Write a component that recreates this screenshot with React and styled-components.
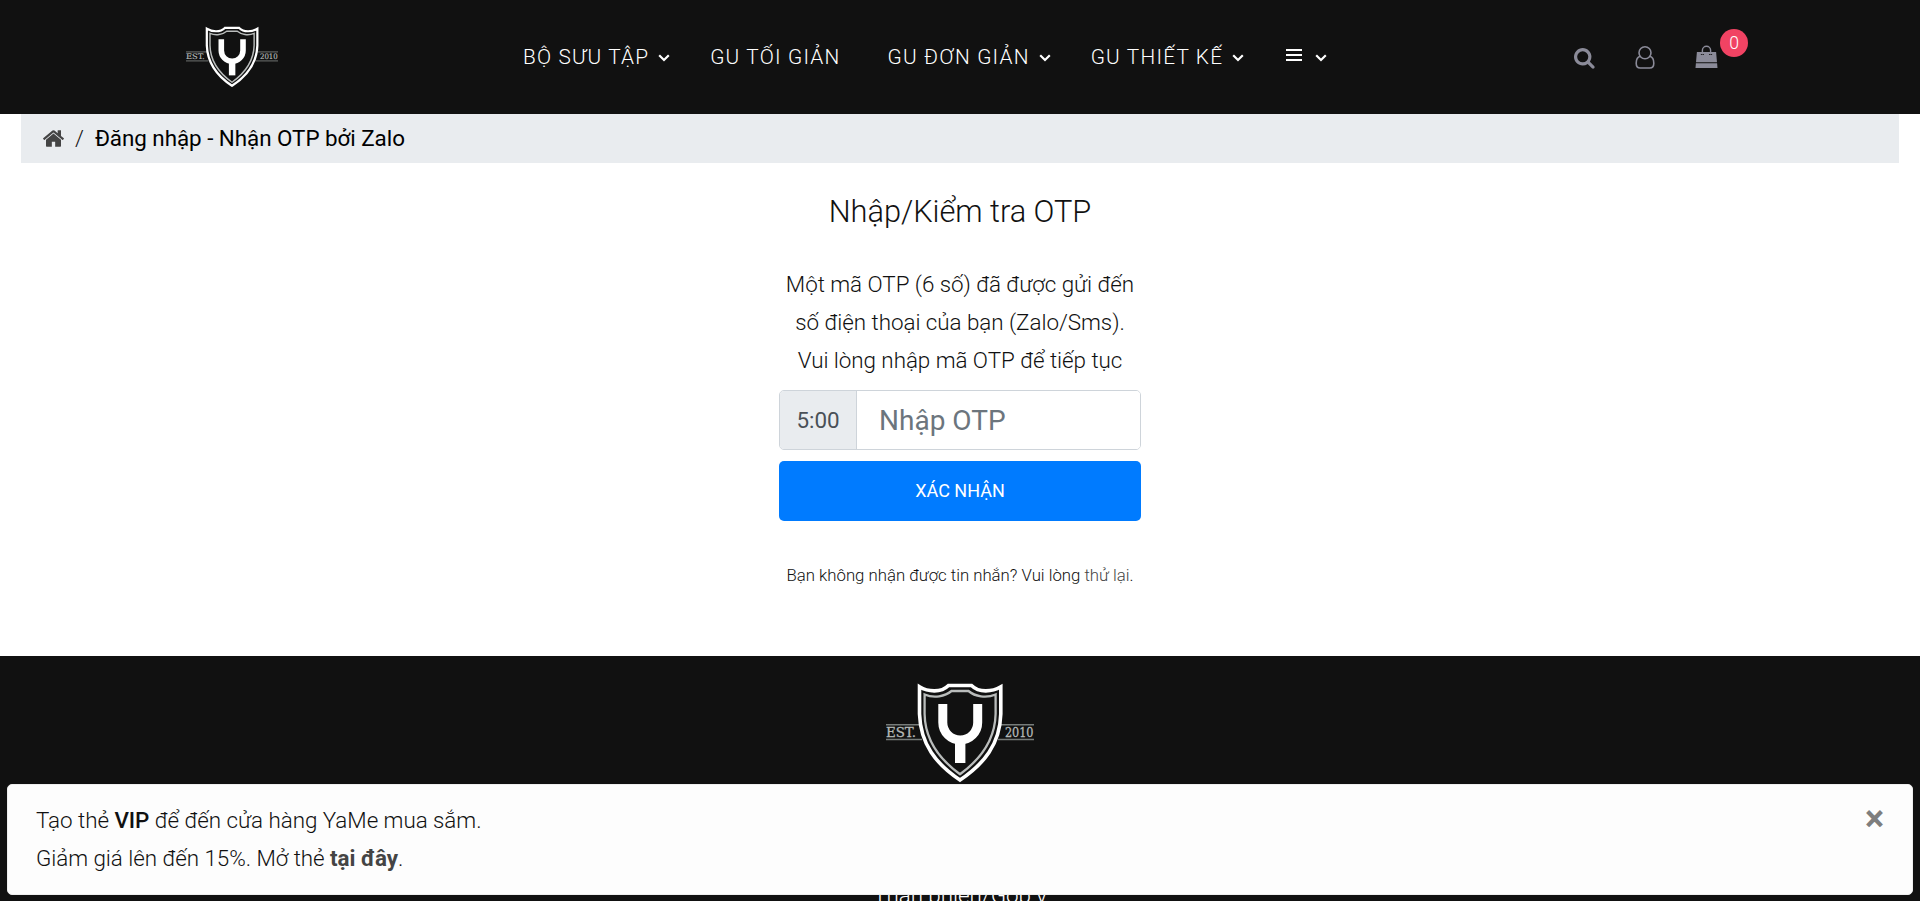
import React from 'react';
import styled, { createGlobalStyle } from 'styled-components';

const GlobalStyle = createGlobalStyle`
  *, *::before, *::after { box-sizing: border-box; }
  html, body { margin: 0; height: 100%; overflow: hidden; }
  body {
    background: #fff;
    color: #111;
    font-family: Roboto, "Liberation Sans", sans-serif;
    font-size: 22.4px;
    font-weight: 300;
    line-height: 1.7;
    letter-spacing: -0.04px;
  }
  a { color: inherit; text-decoration: none; }
`;

const Page = styled.div`
  height: 901px;
  overflow: hidden;
`;

const Header = styled.header`
  display: flex;
  align-items: flex-start;
  height: 114px;
  padding: 27px 171px 0 186px;
  background: #111;
`;

const Logo = styled.svg`
  display: block;
  flex-shrink: 0;
  overflow: visible;
  width: ${(p) => p.$width}px;
  height: ${(p) => p.$height}px;
`;

const Nav = styled.nav`
  display: flex;
  align-items: center;
  height: 62px;
  margin-left: 245px;
`;

const NavLink = styled.a`
  display: flex;
  align-items: center;
  margin-right: ${(p) => p.$after}px;
  color: #fff;
  font-size: 20.8px;
  letter-spacing: 1.2px;
  white-space: nowrap;
`;

const Chevron = styled.svg`
  width: 12px;
  height: 8px;
  margin: 0 0 1px ${(p) => p.$gap || 9}px;
`;

const MenuGlyph = styled.svg`
  width: 16px;
  height: 12px;
  margin-top: -6px;
`;

const Tools = styled.div`
  display: flex;
  margin: 18px 0 0 auto;
  gap: 40px;
  color: #8b8b99;
`;

const ToolIcon = styled.svg`
  display: block;
  width: ${(p) => p.$width}px;
  height: 24px;
`;

const Cart = styled.div`
  position: relative;
  width: 54px;
`;

const Badge = styled.span`
  position: absolute;
  top: -16px;
  left: 25px;
  width: 28px;
  height: 28px;
  border-radius: 50%;
  background: #f14363;
  color: #fff;
  font-size: 17.6px;
  font-weight: 350;
  line-height: 28px;
  text-align: center;
`;

const Breadcrumb = styled.div`
  display: flex;
  align-items: center;
  height: 49px;
  margin: 0 21px;
  padding: 0 22px 1px;
  background: #e9ecef;
`;

const HomeIcon = styled.svg`
  width: 21px;
  height: 17px;
`;

const Slash = styled.span`
  margin: 0 11px;
`;

const Current = styled.span`
  color: #000;
  font-weight: 400;
`;

const Main = styled.main`
  width: 362px;
  height: 493px;
  margin: 0 auto;
  padding-top: 26px;
  text-align: center;
`;

const Title = styled.h1`
  margin: 0 -20px 30px;
  font-size: 30.8px;
  font-weight: 300;
  line-height: 46px;
`;

const Message = styled.p`
  margin: 0 0 10.8px;
  white-space: nowrap;
`;

const InputGroup = styled.div`
  display: flex;
  height: 60px;
  border: 1px solid #ced4da;
  border-radius: 5px;
  overflow: hidden;
`;

const Timer = styled.span`
  display: flex;
  align-items: center;
  justify-content: center;
  width: 77px;
  border-right: 1px solid #ced4da;
  background: #e9ecef;
  color: #495057;
  font-weight: 400;
`;

const OtpInput = styled.input`
  flex: 1;
  min-width: 0;
  border: 0;
  padding: 0 22px;
  color: #495057;
  font: 400 28px Roboto, sans-serif;
  outline: none;
  &::placeholder { color: #6c757d; opacity: 1; }
`;

const Submit = styled.button`
  display: block;
  width: 100%;
  height: 60px;
  margin-top: 11px;
  padding: 0 0 1px;
  border: 0;
  border-radius: 5px;
  background: #007bff;
  color: #fff;
  font: 450 18px Roboto, sans-serif;
`;

const Retry = styled.p`
  margin: 40px 0 0;
  font-size: 16.8px;
  letter-spacing: -0.01px;
  white-space: nowrap;
  a { color: #444; }
`;

const Footer = styled.footer`
  display: flex;
  flex-direction: column;
  align-items: center;
  height: 245px;
  padding-top: 28px;
  background: #111;
  color: #fff;
`;

const FooterLink = styled.a`
  margin-top: 94px;
  font-size: 22.4px;
  white-space: nowrap;
`;

const Toast = styled.aside`
  position: fixed;
  left: 7px;
  right: 7px;
  bottom: 6px;
  display: flex;
  justify-content: space-between;
  height: 111px;
  padding: 16px 29px 16px 28px;
  border: 1px solid #eee;
  border-radius: 5px;
  background: #fdfdfd;
  p { margin: 0; }
  strong { font-weight: 500; }
  a { color: #444; font-weight: 700; }
`;

const Close = styled.button`
  width: 17px;
  height: 36px;
  padding: 0;
  border: 0;
  background: none;
  color: #7e7e7e;
  font: 700 36px/36px Roboto, sans-serif;
  display: flex;
  justify-content: center;
`;

function ShieldLogo({ width, height }) {
  const shield =
    'M33.5 2.8 C42 8 55 9 62.5 1.5 H85.5 C93 9 106 8 114.8 2.8 V30 C114 60 98 80 74 96 C50 80 34.5 60 33.5 30 Z';
  const inner =
    'M38.6 10.5 C48 14.5 59 12.5 65.5 7 H82.5 C89 12.5 100 14.5 109.6 10.5 V30 C109 56 95 75 74 90.2 C53 75 39 56 38.6 30 Z';
  return (
    <Logo $width={width} $height={height} viewBox="0 0 148 98" preserveAspectRatio="none" fill="none">
      <g stroke="#777c7a" strokeWidth="1.5">
        <path d="M0 40.7H34M0 55.4H36M114 40.7H148M112 55.4H148" />
      </g>
      <g fill="#b4b8b6" stroke="#b4b8b6" strokeWidth=".3" fontFamily="'DejaVu Serif', serif" fontSize="12.4">
        <text x="0" y="52.6" textLength="30" lengthAdjust="spacingAndGlyphs">EST.</text>
        <text x="119" y="52.6" textLength="28.5" lengthAdjust="spacingAndGlyphs">2010</text>
      </g>
      <path d={shield} fill="#111" stroke="#fff" strokeWidth="3.6" />
      <path d={inner} stroke="#b9bcbb" strokeWidth="2.3" />
      <path d="M56.8 20V38.5a17.4 17.4 0 0 0 34.9 0V20" stroke="#fff" strokeWidth="9" />
      <path d="M74.2 56V79" stroke="#fff" strokeWidth="10.4" />
    </Logo>
  );
}

function Down({ gap }) {
  return (
    <Chevron $gap={gap} viewBox="0 0 12 8" fill="none" stroke="#fff" strokeWidth="2.2">
      <path d="M1.2 1.3 6 6 10.8 1.3" />
    </Chevron>
  );
}

export default function App() {
  return (
    <Page>
      <GlobalStyle />
      <Header>
        <ShieldLogo width={92} height={60} />
        <Nav>
          <NavLink href="#" $after={40}>BỘ SƯU TẬP<Down /></NavLink>
          <NavLink href="#" $after={47}>GU TỐI GIẢN</NavLink>
          <NavLink href="#" $after={40}>GU ĐƠN GIẢN<Down /></NavLink>
          <NavLink href="#" $after={42}>GU THIẾT KẾ<Down /></NavLink>
          <NavLink href="#" $after={0}>
            <MenuGlyph viewBox="0 0 16 12" stroke="#fff" strokeWidth="2">
              <path d="M0 1H16M0 6H16M0 11H16" />
            </MenuGlyph>
            <Down gap={13} />
          </NavLink>
        </Nav>
        <Tools>
          <ToolIcon $width={21} viewBox="0 0 21 24">
            <path
              transform="translate(-.8 1.5) scale(.0124)"
              fill="currentColor"
              d="M1216 832q0-185-131.5-316.5t-316.5-131.5-316.5 131.5-131.5 316.5 131.5 316.5 316.5 131.5 316.5-131.5 131.5-316.5zm512 832q0 52-38 90t-90 38q-54 0-90-38l-343-342q-179 124-399 124-143 0-273.5-55.5t-225-150-150-225-55.5-273.5 55.5-273.5 150-225 225-150 273.5-55.5 273.5 55.5 225 150 150 225 55.5 273.5q0 220-124 399l343 343q37 37 37 90z"
            />
          </ToolIcon>
          <ToolIcon $width={20} viewBox="0 0 20 24" fill="none" stroke="currentColor" strokeWidth="1.6">
            <circle cx="10" cy="7.7" r="6" />
            <path d="M5.2 11.2C2.3 12 1.2 15 1.2 18.2c0 3 1.6 4.8 4 4.8h9.6c2.4 0 4-1.8 4-4.8 0-3.2-1.1-6.2-4-7" />
          </ToolIcon>
          <Cart>
            <ToolIcon $width={23} viewBox="0 0 23 24">
              <path fill="currentColor" d="M1.9 7H21.1L22 17.2H1ZM.9 18.2H22.1L22.5 23H.5Z" />
              <path d="M5.9 9.5H8.9M14.1 9.5H17.1" stroke="#111" strokeWidth="1" />
              <path d="M7.4 9.5V5.3a4.1 4.1 0 0 1 8.2 0v4.2" fill="none" stroke="currentColor" strokeWidth="1.4" />
            </ToolIcon>
            <Badge>0</Badge>
          </Cart>
        </Tools>
      </Header>
      <Breadcrumb>
        <HomeIcon viewBox="25 253 1614 1283" fill="#444">
          <path d="M1408 992v480q0 26-19 45t-45 19h-384v-384h-256v384h-384q-26 0-45-19t-19-45v-480q0-1 .5-3t.5-3l575-474 575 474q1 2 1 6zm223-69l-62 74q-8 9-21 11h-3q-13 0-21-7l-692-577-692 577q-12 8-24 7-13-2-21-11l-62-74q-8-10-7-23.5t11-21.5l719-599q32-26 76-26t76 26l244 204v-195q0-14 9-23t23-9h192q14 0 23 9t9 23v408l219 182q10 8 11 21.5t-7 23.5z" />
        </HomeIcon>
        <Slash>/</Slash>
        <Current>Đăng nhập - Nhận OTP bởi Zalo</Current>
      </Breadcrumb>
      <Main>
        <Title>Nhập/Kiểm tra OTP</Title>
        <Message>
          Một mã OTP (6 số) đã được gửi đến<br />
          số điện thoại của bạn (Zalo/Sms).<br />
          Vui lòng nhập mã OTP để tiếp tục
        </Message>
        <InputGroup>
          <Timer>5:00</Timer>
          <OtpInput placeholder="Nhập OTP" />
        </InputGroup>
        <Submit>XÁC NHẬN</Submit>
        <Retry>Bạn không nhận được tin nhắn? Vui lòng <a href="#">thử lại</a>.</Retry>
      </Main>
      <Footer>
        <ShieldLogo width={148} height={98} />
        <FooterLink href="#">Than phiền/Góp ý</FooterLink>
      </Footer>
      <Toast>
        <div>
          <p>Tạo thẻ <strong>VIP</strong> để đến cửa hàng YaMe mua sắm.</p>
          <p>Giảm giá lên đến 15%. Mở thẻ <a href="#">tại đây</a>.</p>
        </div>
        <Close>×</Close>
      </Toast>
    </Page>
  );
}
